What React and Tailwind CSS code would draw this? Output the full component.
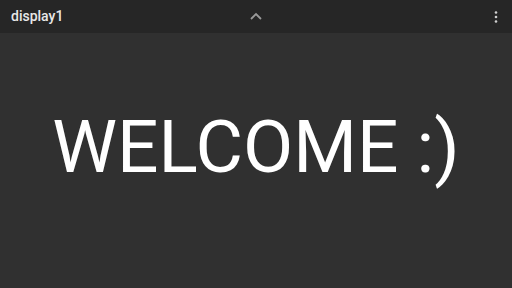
export default function App() {
  return (
    <div className="w-[512px] h-[288px] flex flex-col bg-[#303030] overflow-hidden" style={{ fontFamily: "Roboto, sans-serif" }}>
      <div className="h-[33px] flex items-center justify-between bg-[#262626] pl-[11px] pr-[14px] relative">
        <span className="text-[14px] font-medium text-[#e8e8e8]">display1</span>
        <svg className="absolute left-[249px] top-[11px]" width="14" height="10" viewBox="0 0 14 10">
          <path d="M2 8 L7 3 L12 8" fill="none" stroke="#9a9a9a" strokeWidth="1.8" />
        </svg>
        <svg width="4" height="14" viewBox="0 0 4 14">
          <circle cx="2" cy="2.5" r="1.3" fill="#d0d0d0" />
          <circle cx="2" cy="7" r="1.3" fill="#d0d0d0" />
          <circle cx="2" cy="11.5" r="1.3" fill="#d0d0d0" />
        </svg>
      </div>
      <div className="flex-1 flex items-center justify-center">
        <span className="text-[73px] leading-none text-white mb-[26px]">WELCOME :)</span>
      </div>
    </div>
  );
}
